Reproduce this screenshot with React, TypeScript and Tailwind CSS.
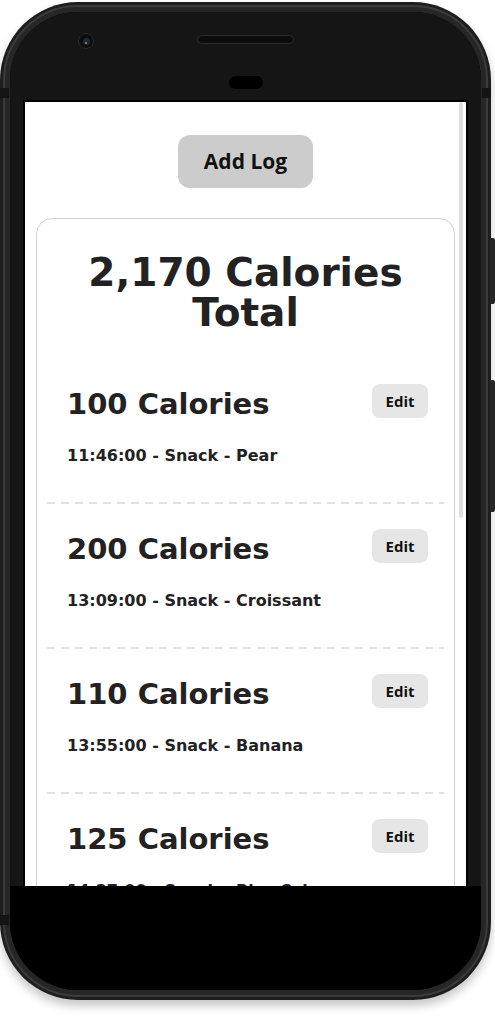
import React from "react";

const logs = [
  { cal: 100, time: "11:46:00", meal: "Snack", food: "Pear" },
  { cal: 200, time: "13:09:00", meal: "Snack", food: "Croissant" },
  { cal: 110, time: "13:55:00", meal: "Snack", food: "Banana" },
  { cal: 125, time: "14:27:00", meal: "Snack", food: "Rice Cake" },
];

function LogItem({ cal, time, meal, food }: { cal: number; time: string; meal: string; food: string }) {
  return (
    <div>
      <div className="pt-[25px] pb-[34px] pl-[20px] pr-[16px]">
        <div className="flex items-start justify-between">
          <h2 className="text-[29px] leading-[41px] font-bold text-[#222]">{cal} Calories</h2>
          <button
            type="button"
            className="h-[34px] w-[56px] rounded-[8px] bg-[#e6e6e6] text-[15px] font-bold text-[#111] font-['Open_Sans',sans-serif]"
          >
            Edit
          </button>
        </div>
        <p className="mt-[19px] text-[16px] leading-[24px] font-bold text-[#222]">
          {time} - {meal} - {food}
        </p>
      </div>
      <div className="h-[2px] bg-[repeating-linear-gradient(to_right,#e2e2e2_0_8px,transparent_8px_14px)]" />
    </div>
  );
}

export default function App() {
  return (
    <div className="relative w-[495px] h-[1024px] bg-white font-['DejaVu_Sans',sans-serif]">
      {/* little mark on top edge */}
      <div className="absolute left-[372px] top-0 w-[7px] h-[9px] bg-[#222]" />

      <div className="relative mt-[2px] w-[491px] h-[998px] rounded-[78px] bg-[#1e1e1e] p-[3px] shadow-[0_6px_10px_rgba(0,0,0,0.22)]">
        {/* antenna lines */}
        <div className="absolute left-0 top-[86px] w-[9px] h-[10px] bg-[#141414]" />
        <div className="absolute right-0 top-[86px] w-[9px] h-[10px] bg-[#141414]" />
        <div className="absolute left-0 top-[913px] w-[9px] h-[10px] bg-[#141414]" />
        {/* side buttons */}
        <div className="absolute right-[-4px] top-[236px] w-[5px] h-[66px] rounded-r-[2px] bg-[#262626]" />
        <div className="absolute right-[-4px] top-[378px] w-[5px] h-[132px] rounded-r-[2px] bg-[#262626]" />

        <div className="h-full rounded-[75px] border-[2px] border-[#3b3b3b] bg-[#262626] p-[5px]">
          <div className="h-full rounded-[68px] overflow-hidden flex flex-col bg-black">
            <div className="bg-[#151515] px-[13px]">
              {/* bezel */}
              <div className="h-[88px] flex flex-col items-center pt-[23px]">
                <div className="w-full grid grid-cols-[1fr_97px_1fr] items-start">
                  <div className="pl-[55px] -mt-[2px]">
                    <div className="w-[16px] h-[16px] rounded-full bg-[#0d0d0d] border border-[#2a2a2a] flex items-center justify-center">
                      <div className="w-[7px] h-[7px] rounded-full bg-[#1f2a33] flex items-end justify-center">
                        <div className="w-[2px] h-[2px] mb-[1px] rounded-full bg-[#9a9440]" />
                      </div>
                    </div>
                  </div>
                  <div className="h-[9px] rounded-full bg-[#0c0c0c] border border-[#2c2c2c]" />
                  <div />
                </div>
                <div className="mt-[27px] w-[34px] h-[13px] rounded-full bg-black" />
              </div>
              {/* screen */}
              <div className="border-x-[2px] border-t-[2px] border-black">
                <div className="relative h-[784px] bg-white overflow-hidden">
                  <div className="absolute right-[3px] top-0 w-[4px] h-[416px] rounded-full bg-[#dedede]" />
                  <div className="flex flex-col items-center pt-[33px] px-[11px]">
                    <button
                      type="button"
                      className="h-[53px] w-[135px] rounded-[12px] bg-[#cccccc] text-[21px] font-bold text-[#111] font-['Open_Sans',sans-serif]"
                    >
                      Add Log
                    </button>
                    <div className="mt-[30px] w-full rounded-[16px] border border-[#d2d2d2] px-[10px] pt-[34px]">
                      <h1 className="text-center text-[39px] leading-[40px] font-bold text-[#222] mb-[26px]">
                        2,170 Calories Total
                      </h1>
                      {logs.map((l) => (
                        <LogItem key={l.time} {...l} />
                      ))}
                    </div>
                  </div>
                </div>
              </div>
            </div>
            <div className="flex-1 bg-black" />
          </div>
        </div>
      </div>
    </div>
  );
}
